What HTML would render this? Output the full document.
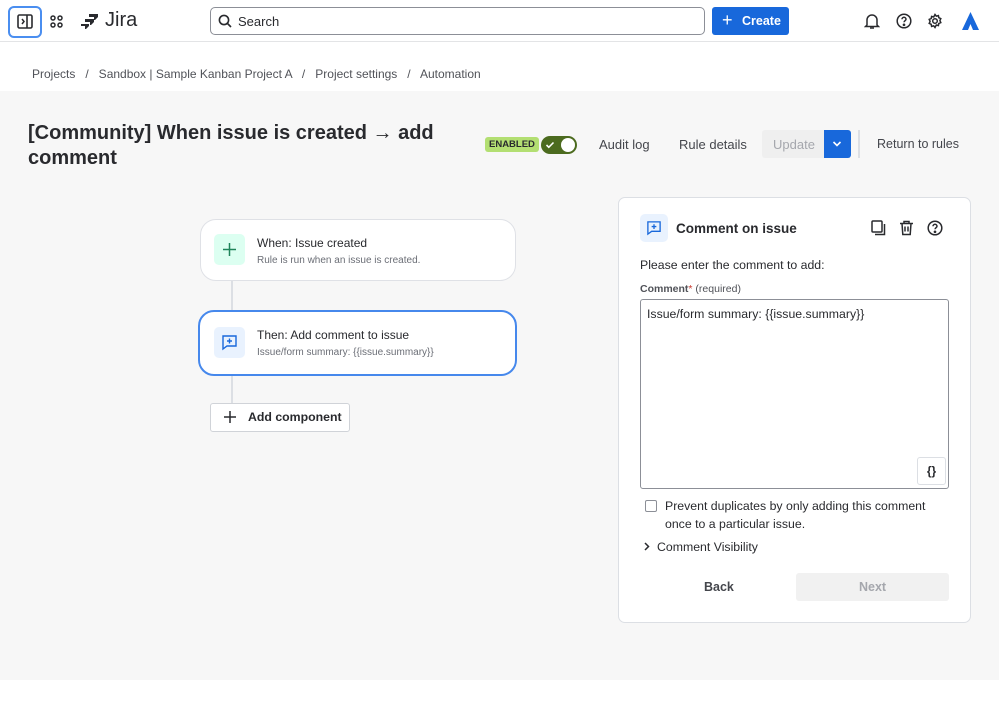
<!DOCTYPE html>
<html><head><style>
*{box-sizing:border-box;margin:0;padding:0}
body{width:999px;height:705px;overflow:hidden;background:#fff;font-family:"Liberation Sans",Arial,sans-serif;color:#292a2e;position:relative}
.abs{position:absolute}
.hdr{left:0;top:0;width:999px;height:42px;border-bottom:1px solid #e3e4e6;background:#fff}
.gray{left:0;top:91px;width:999px;height:589px;background:#f7f7f7}
.card{background:#fff;border:1px solid #dcdfe4;border-radius:16px}
.t{white-space:nowrap}
</style></head><body>
<div class="abs hdr"></div>
<div class="abs" style="left:8px;top:6px;width:34px;height:32px;border:2px solid #4a8ef0;border-radius:6px"></div>
<svg class="abs" style="left:17px;top:14px" width="16" height="15" viewBox="0 0 16 15"><rect x="1" y="1" width="14" height="13" rx="1.5" fill="none" stroke="#292a2e" stroke-width="1.6"/><line x1="10" y1="1" x2="10" y2="14" stroke="#292a2e" stroke-width="1.6"/><path d="M5 5l2 2.5-2 2.5" fill="none" stroke="#292a2e" stroke-width="1.5"/></svg>
<svg class="abs" style="left:50px;top:15px" width="13" height="13" viewBox="0 0 13 13" fill="none" stroke="#292a2e" stroke-width="1.5"><circle cx="3" cy="3" r="2"/><circle cx="10" cy="3" r="2"/><circle cx="3" cy="10" r="2"/><circle cx="10" cy="10" r="2"/></svg>
<svg class="abs" style="left:81px;top:13px" width="18" height="17" viewBox="0 0 18 17" fill="#292a2e"><path d="M8 1h9v3l-3 3h-1V4H8z"/><path d="M4 6h9v3l-3 3H9V9H4z"/><path d="M0 11h8v2l-3 3H4v-3H0z"/></svg>
<div class="abs t" style="left:105px;top:9px;font-size:20px;color:#292a2e">Jira</div>
<div class="abs" style="left:210px;top:7px;width:495px;height:28px;border:1px solid #8c8f97;border-radius:5px"></div>
<svg class="abs" style="left:218px;top:14px" width="14" height="14" viewBox="0 0 14 14" fill="none" stroke="#292a2e" stroke-width="1.6"><circle cx="6" cy="6" r="4.6"/><path d="M9.5 9.5L13 13"/></svg>
<div class="abs t" style="left:238px;top:14px;font-size:13px">Search</div>
<div class="abs" style="left:712px;top:7px;width:77px;height:28px;background:#1868db;border-radius:3px"></div>
<div class="abs t" style="left:722px;top:10px;font-size:18px;color:#fff;line-height:20px">+</div>
<div class="abs t" style="left:742px;top:14px;font-size:12.5px;color:#fff;font-weight:bold">Create</div>
<svg class="abs" style="left:864px;top:13px" width="16" height="17" viewBox="0 0 16 17" fill="none" stroke="#292a2e" stroke-width="1.5"><path d="M3 12V7a5 5 0 0110 0v5l1.5 1.5h-13z"/><path d="M6 15h4"/></svg>
<svg class="abs" style="left:896px;top:13px" width="16" height="16" viewBox="0 0 16 16" fill="none" stroke="#292a2e" stroke-width="1.5"><circle cx="8" cy="8" r="6.8"/><path d="M6 6.3a2 2 0 114 0c0 1.3-2 1.5-2 3"/><circle cx="8" cy="11.8" r=".6" fill="#292a2e"/></svg>
<svg class="abs" style="left:927px;top:13px" width="16" height="16" viewBox="0 0 16 16" fill="none" stroke="#292a2e" stroke-width="1.5"><circle cx="8" cy="8" r="2.3"/><path d="M8 1.5l1.3 1.7 2.1-.6.4 2.1 2 .9-.9 2 .9 2-2 .9-.4 2.1-2.1-.6L8 14.5l-1.3-1.7-2.1.6-.4-2.1-2-.9.9-2-.9-2 2-.9.4-2.1 2.1.6z"/></svg>
<svg class="abs" style="left:962px;top:12px" width="17" height="18" viewBox="0 0 17 18" fill="#1868db"><path d="M8.5 0L17 18h-6L8.5 12 6 18H0z"/></svg>

<div class="abs t" style="left:32px;top:67px;font-size:12px;color:#505258">Projects &nbsp;&nbsp;/&nbsp;&nbsp; Sandbox | Sample Kanban Project A &nbsp;&nbsp;/&nbsp;&nbsp; Project settings &nbsp;&nbsp;/&nbsp;&nbsp; Automation</div>

<div class="abs gray"></div>
<div class="abs" style="left:28px;top:121px;width:440px;font-size:20px;font-weight:bold;line-height:25px;color:#292a2e">[Community] When issue is created → add comment</div>
<div class="abs t" style="left:485px;top:137px;height:15px;padding:0 4px;background:#b3df72;border-radius:3px;font-size:9.5px;font-weight:bold;line-height:15px;color:#292a2e">ENABLED</div>
<div class="abs" style="left:541px;top:136px;width:36px;height:18px;background:#4c6b1f;border-radius:9px"></div>
<div class="abs" style="left:561px;top:138px;width:14px;height:14px;background:#fff;border-radius:50%"></div>
<svg class="abs" style="left:545px;top:140px" width="10" height="10" viewBox="0 0 10 10" fill="none" stroke="#fff" stroke-width="1.6"><path d="M1.5 5l2.3 2.3L8.5 2.5"/></svg>
<div class="abs t" style="left:599px;top:137px;font-size:13px;color:#44464c">Audit log</div>
<div class="abs t" style="left:679px;top:137px;font-size:13px;color:#44464c">Rule details</div>
<div class="abs" style="left:762px;top:130px;width:62px;height:28px;background:#efefef;border-radius:3px 0 0 3px"></div>
<div class="abs t" style="left:773px;top:137px;font-size:13px;color:#a5a7ad">Update</div>
<div class="abs" style="left:824px;top:130px;width:27px;height:28px;background:#1868db;border-radius:0 3px 3px 0"></div>
<svg class="abs" style="left:832px;top:140px" width="10" height="8" viewBox="0 0 10 8" fill="none" stroke="#fff" stroke-width="1.6"><path d="M1.5 2l3.5 3.5L8.5 2"/></svg>
<div class="abs" style="left:858px;top:130px;width:2px;height:28px;background:#dcdfe4"></div>
<div class="abs t" style="left:877px;top:137px;font-size:12.5px;color:#44464c">Return to rules</div>

<div class="abs" style="left:231px;top:280px;width:2px;height:125px;background:#dcdfe4"></div>
<div class="abs card" style="left:200px;top:219px;width:316px;height:62px;border-color:#dfe1e6"></div>
<div class="abs" style="left:214px;top:234px;width:31px;height:31px;background:#dcfff1;border-radius:5px"></div>
<svg class="abs" style="left:222px;top:242px" width="15" height="15" viewBox="0 0 15 15" stroke="#1f845a" stroke-width="1.5"><path d="M7.5 1v13M1 7.5h13"/></svg>
<div class="abs t" style="left:257px;top:236px;font-size:12px">When: Issue created</div>
<div class="abs t" style="left:257px;top:255px;font-size:10px;color:#6b6e76">Rule is run when an issue is created.</div>
<div class="abs card" style="left:198px;top:310px;width:319px;height:66px;border:2px solid #4688ec"></div>
<div class="abs" style="left:214px;top:327px;width:31px;height:31px;background:#e9f2fe;border-radius:5px"></div>
<svg class="abs" style="left:221px;top:334px" width="17" height="17" viewBox="0 0 17 17" fill="none" stroke="#1868db" stroke-width="1.4"><path d="M2 2h13v10H6l-4 3z"/><path d="M8.5 4.5v5M6 7h5"/></svg>
<div class="abs t" style="left:257px;top:328px;font-size:12px">Then: Add comment to issue</div>
<div class="abs t" style="left:257px;top:347px;font-size:10px;color:#6b6e76">Issue/form summary: {{issue.summary}}</div>
<div class="abs" style="left:210px;top:403px;width:140px;height:29px;background:#fff;border:1px solid #d0d3d8;border-radius:3px"></div>
<svg class="abs" style="left:223px;top:410px" width="14" height="14" viewBox="0 0 14 14" stroke="#292a2e" stroke-width="1.5"><path d="M7 1v12M1 7h12"/></svg>
<div class="abs t" style="left:248px;top:410px;font-size:12.3px;font-weight:bold">Add component</div>

<div class="abs" style="left:618px;top:197px;width:353px;height:426px;background:#fff;border:1px solid #dcdfe4;border-radius:7px"></div>
<div class="abs" style="left:640px;top:214px;width:28px;height:28px;background:#e9f2fe;border-radius:5px"></div>
<svg class="abs" style="left:646px;top:220px" width="16" height="16" viewBox="0 0 17 17" fill="none" stroke="#1868db" stroke-width="1.4"><path d="M2 2h13v10H6l-4 3z"/><path d="M8.5 4.5v5M6 7h5"/></svg>
<div class="abs t" style="left:676px;top:221px;font-size:13.5px;font-weight:bold">Comment on issue</div>
<svg class="abs" style="left:871px;top:220px" width="15" height="16" viewBox="0 0 15 16" fill="none" stroke="#292a2e" stroke-width="1.5"><rect x="1" y="1" width="10" height="11" rx="1"/><path d="M13.5 4v10.5H4"/></svg>
<svg class="abs" style="left:899px;top:220px" width="15" height="16" viewBox="0 0 15 16" fill="none" stroke="#292a2e" stroke-width="1.5"><path d="M1 3.5h13M5 3.5V1.5h5v2M3 3.5l.8 11h7.4l.8-11M6 6.5v5M9 6.5v5"/></svg>
<svg class="abs" style="left:927px;top:220px" width="16" height="16" viewBox="0 0 16 16" fill="none" stroke="#292a2e" stroke-width="1.5"><circle cx="8" cy="8" r="6.8"/><path d="M6 6.3a2 2 0 114 0c0 1.3-2 1.5-2 3"/><circle cx="8" cy="11.8" r=".6" fill="#292a2e"/></svg>
<div class="abs t" style="left:640px;top:258px;font-size:12.3px">Please enter the comment to add:</div>
<div class="abs t" style="left:640px;top:283px;font-size:10.5px;color:#505258"><b>Comment</b><span style="color:#c9372c">*</span> (required)</div>
<div class="abs" style="left:640px;top:299px;width:309px;height:190px;border:1px solid #8c8f97;border-radius:3px;background:#fff"></div>
<div class="abs t" style="left:647px;top:307px;font-size:12.3px">Issue/form summary: {{issue.summary}}</div>
<div class="abs" style="left:917px;top:457px;width:29px;height:28px;border:1px solid #dcdfe4;border-radius:3px;background:#fff;font-size:12px;font-weight:bold;text-align:center;line-height:26px">{}</div>
<div class="abs" style="left:645px;top:500px;width:12px;height:12px;border:1.5px solid #8c8f97;border-radius:2px"></div>
<div class="abs" style="left:665px;top:498px;width:280px;font-size:12.3px;line-height:17.5px">Prevent duplicates by only adding this comment once to a particular issue.</div>
<svg class="abs" style="left:644px;top:542px" width="6" height="9" viewBox="0 0 6 9" fill="none" stroke="#292a2e" stroke-width="1.5"><path d="M1 1l3.5 3.5L1 8"/></svg>
<div class="abs t" style="left:657px;top:540px;font-size:12.3px">Comment Visibility</div>
<div class="abs t" style="left:704px;top:580px;font-size:12.5px;font-weight:bold;color:#44464c">Back</div>
<div class="abs" style="left:796px;top:573px;width:153px;height:28px;background:#f1f1f1;border-radius:3px"></div>
<div class="abs t" style="left:859px;top:580px;font-size:12.5px;font-weight:bold;color:#a5a7ad">Next</div>
</body></html>
